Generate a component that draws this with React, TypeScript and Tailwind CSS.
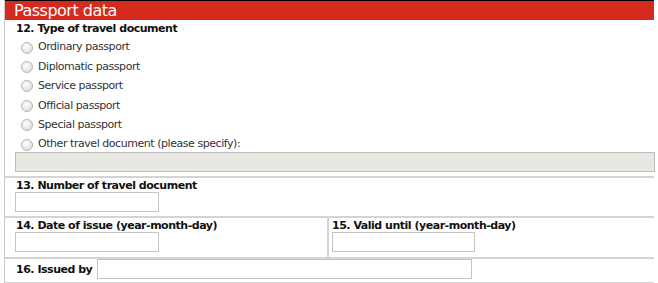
import React from "react";

const Radio = ({ label }: { label: string }) => (
  <label className="flex items-center h-[19.4px] pl-[16px]">
    <span className="w-[12px] h-[12px] rounded-full border border-[#b5b5b5] bg-[radial-gradient(circle_at_40%_35%,#ffffff,#d4d4d4)] shrink-0" />
    <span className="ml-[5px] text-[11px] text-[#333] tracking-[-0.45px]">{label}</span>
  </label>
);

const Input = ({ w }: { w: string }) => (
  <div className={`${w} h-[20px] border border-[#c4c4c4] bg-white`} />
);

const bold = "text-[11px] font-bold text-[#111] tracking-[-0.48px]";

export default function App() {
  return (
    <div className="w-[658px] h-[283px] bg-white overflow-hidden font-['DejaVu_Sans',sans-serif]">
      <div className="ml-[4px] w-[650px] border-l border-[#c8c8c8]">
        <div className="h-px bg-black" />
        <div className="h-[19px] bg-[#d52a1e] text-white text-[16px] leading-[19px] pl-[9px] tracking-[-0.5px]">
          Passport data
        </div>
        <div className="pt-[1px] pb-[4px] border-b-2 border-[#d4d4d4]">
          <div className={`pl-[11px] h-[16px] leading-[16px] ${bold}`}>
            12. Type of travel document
          </div>
          <div className="pt-[1px]">
            <Radio label="Ordinary passport" />
            <Radio label="Diplomatic passport" />
            <Radio label="Service passport" />
            <Radio label="Official passport" />
            <Radio label="Special passport" />
            <Radio label="Other travel document (please specify):" />
          </div>
          <div className="ml-[10px] mt-[-2px] w-[640px] h-[20px] border border-[#bdbdbd] bg-[#e8e7e2]" />
        </div>
        <div className="pt-[2px] pb-[4px] pl-[10px] border-b-2 border-[#d4d4d4]">
          <div className={`h-[12px] leading-[12px] pl-[1px] ${bold}`}>
            13. Number of travel document
          </div>
          <Input w="w-[144px]" />
        </div>
        <div className="flex border-b-2 border-[#d4d4d4]">
          <div className="w-[324px] pt-[2px] pb-[5px] pl-[10px] border-r-2 border-[#d4d4d4]">
            <div className={`h-[12px] leading-[12px] pl-[1px] ${bold}`}>
              14. Date of issue (year-month-day)
            </div>
            <Input w="w-[144px]" />
          </div>
          <div className="pt-[2px] pb-[5px] pl-[3px]">
            <div className={`h-[12px] leading-[12px] ${bold}`}>
              15. Valid until (year-month-day)
            </div>
            <Input w="w-[143px]" />
          </div>
        </div>
        <div className="flex items-start h-[25px] pl-[11px] border-b-2 border-[#d4d4d4]">
          <span className={`leading-[20px] pt-[1px] ${bold}`}>16. Issued by</span>
          <div className="ml-[5px]">
            <Input w="w-[375px]" />
          </div>
        </div>
      </div>
    </div>
  );
}
